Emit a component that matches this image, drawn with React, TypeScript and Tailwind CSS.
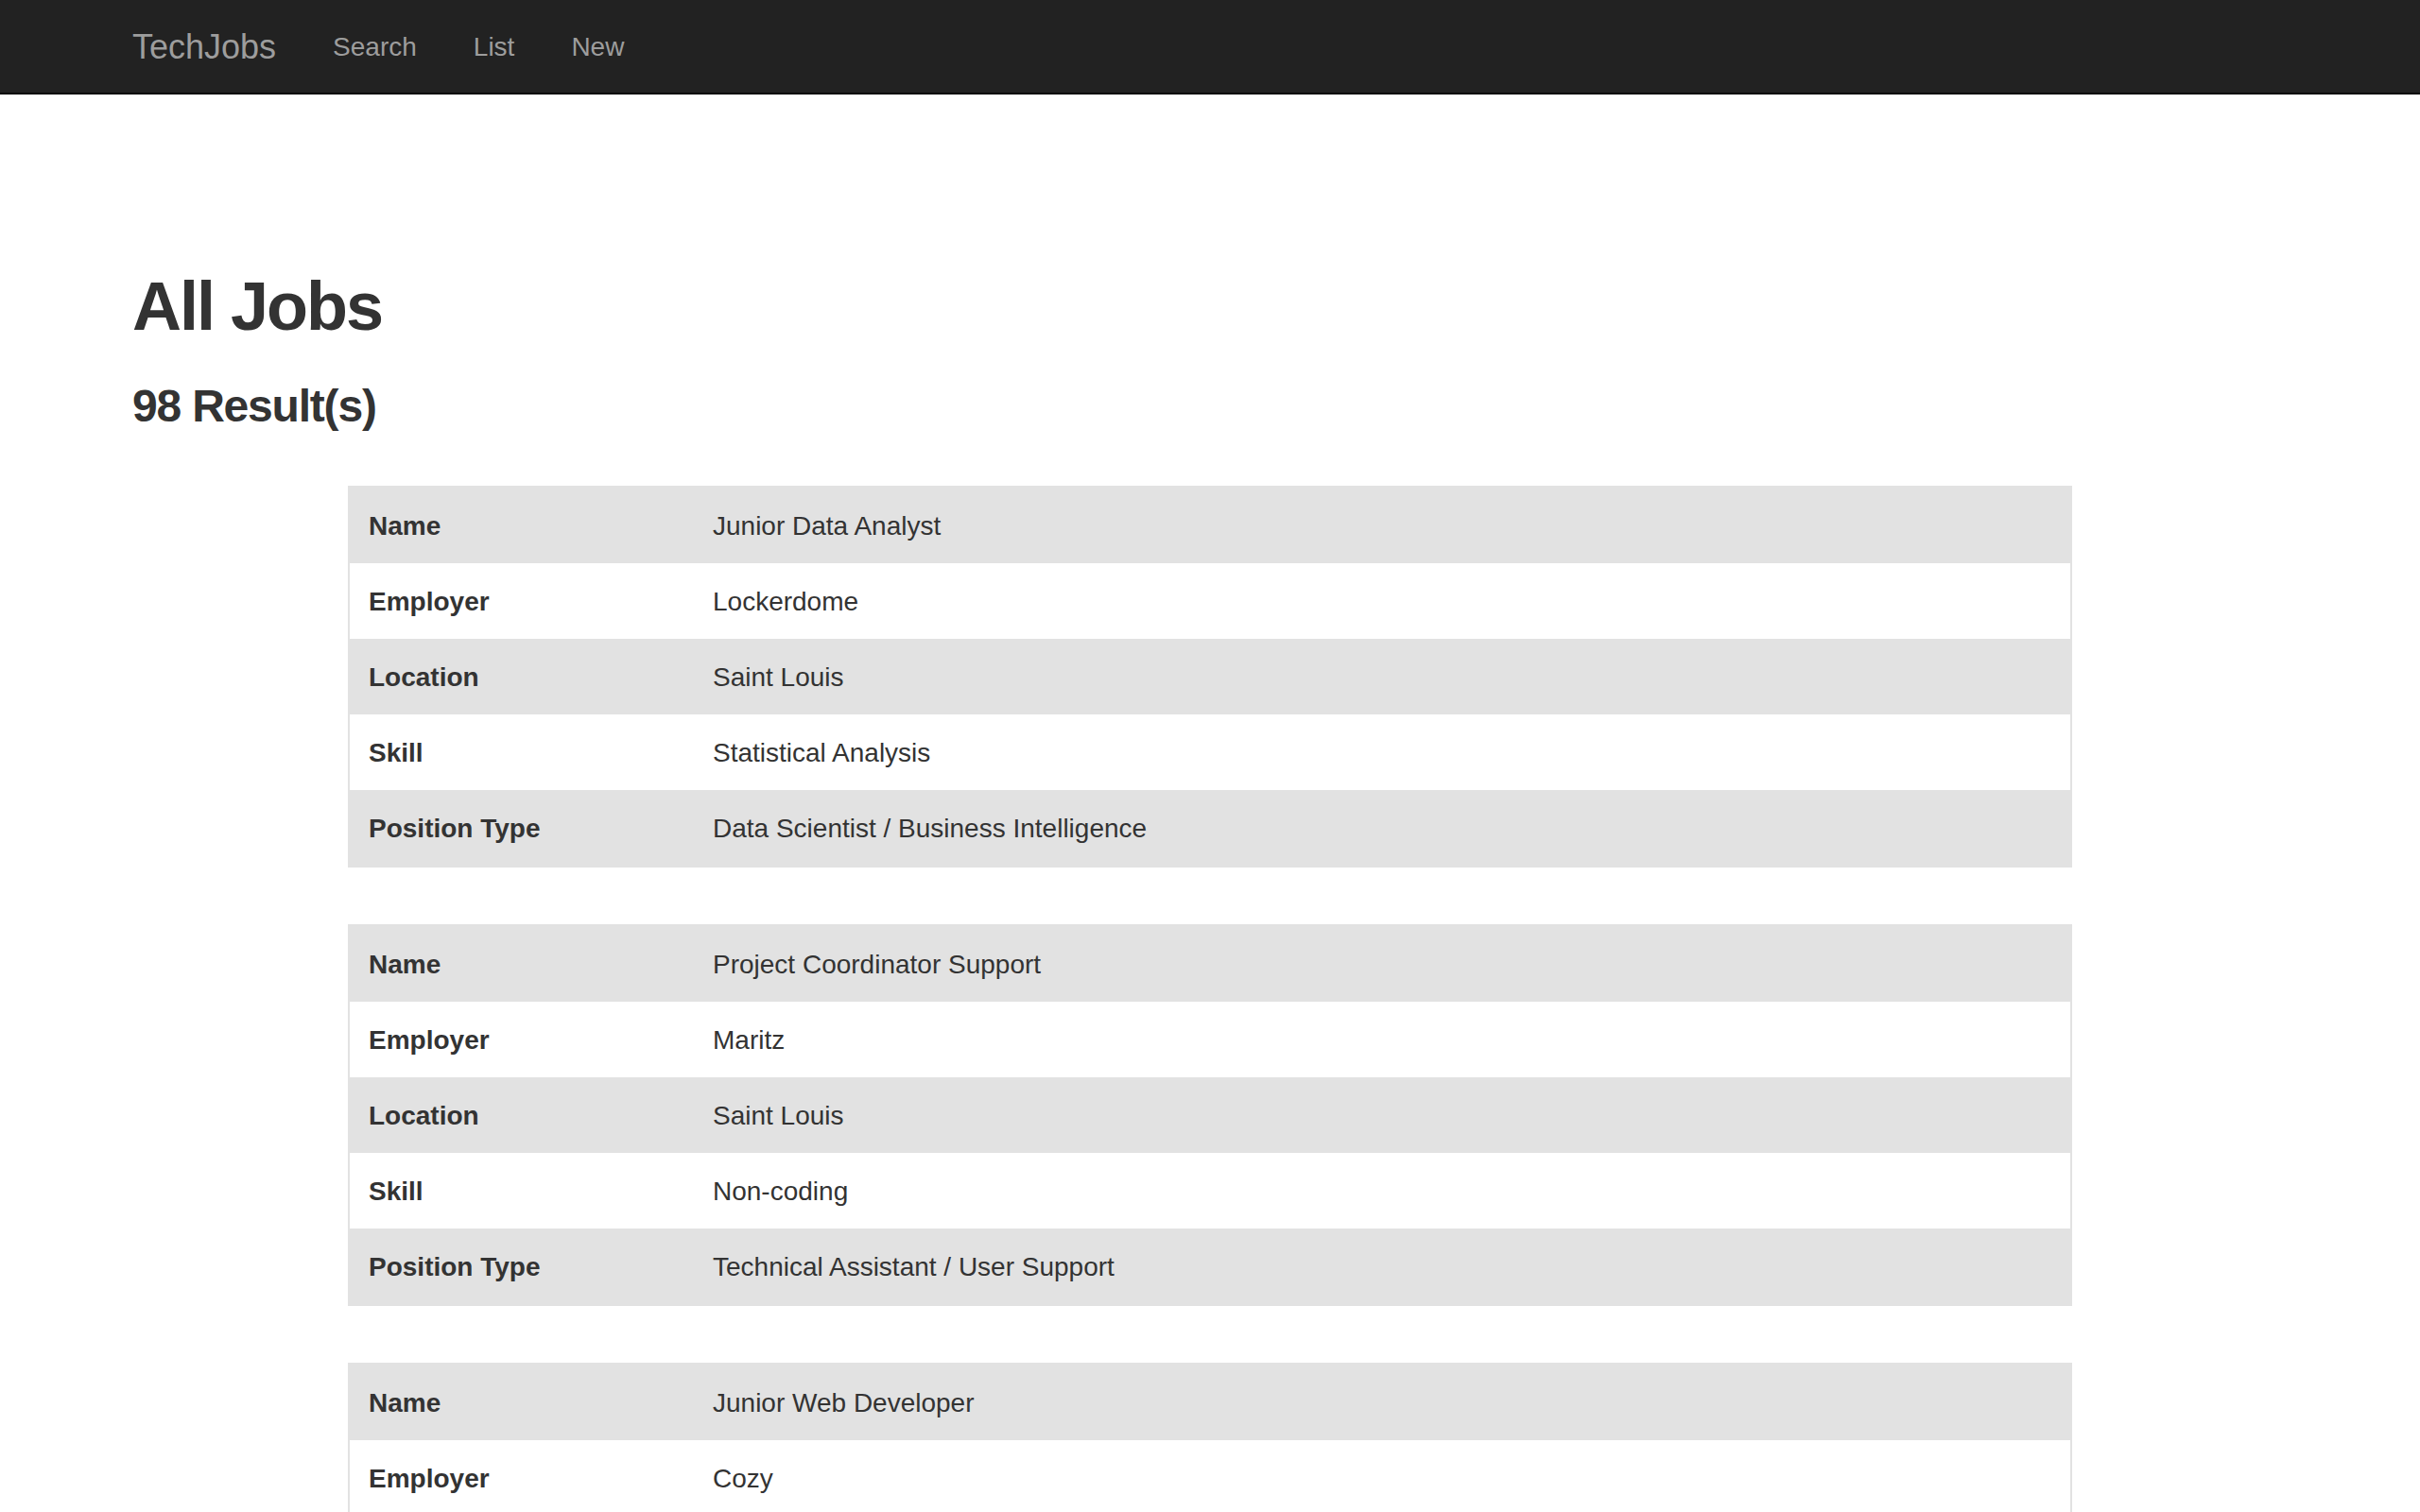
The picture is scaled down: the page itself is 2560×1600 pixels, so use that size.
const jobs = [
  {
    name: "Junior Data Analyst",
    employer: "Lockerdome",
    location: "Saint Louis",
    skill: "Statistical Analysis",
    positionType: "Data Scientist / Business Intelligence",
  },
  {
    name: "Project Coordinator Support",
    employer: "Maritz",
    location: "Saint Louis",
    skill: "Non-coding",
    positionType: "Technical Assistant / User Support",
  },
  {
    name: "Junior Web Developer",
    employer: "Cozy",
    location: "Portland",
    skill: "Ruby",
    positionType: "Web - Back End",
  },
];

type Job = (typeof jobs)[number];

const JobTable = ({ job }: { job: Job }) => {
  const rows = [
    ["Name", job.name],
    ["Employer", job.employer],
    ["Location", job.location],
    ["Skill", job.skill],
    ["Position Type", job.positionType],
  ];
  return (
    <table className="w-4/5 mx-auto mb-[60px] table-fixed border-separate border-spacing-0 border-2 border-[#e2e2e2]">
      <tbody>
        {rows.map(([label, value], i) => (
          <tr key={label} className={i % 2 === 0 ? "h-[80px] bg-[#e2e2e2]" : "h-[80px] bg-white"}>
            <td className="w-1/5 px-[20px] pt-[2px] align-middle font-bold text-[28px]">{label}</td>
            <td className="px-[20px] pt-[2px] align-middle text-[28px]">{value}</td>
          </tr>
        ))}
      </tbody>
    </table>
  );
};

export default function App() {
  return (
    <div className="min-h-screen bg-white text-[#333] font-['Liberation_Sans',Arial,sans-serif]">
      <nav className="h-[100px] bg-[#222] border-b-2 border-[#080808]">
        <div className="w-[2340px] mx-auto px-[30px] pt-[2px] h-full flex items-center text-[#9d9d9d]">
          <a className="text-[36px] pr-[30px]">TechJobs</a>
          <a className="text-[28px] px-[30px]">Search</a>
          <a className="text-[28px] px-[30px]">List</a>
          <a className="text-[28px] px-[30px]">New</a>
        </div>
      </nav>
      <main className="w-[2340px] mx-auto px-[30px]">
        <h1 className="mt-[185px] text-[72px] leading-[1.1] font-bold tracking-[-2px]">All Jobs</h1>
        <h3 className="mt-[40px] mb-[57px] text-[48px] leading-[1.1] font-bold tracking-[-1.2px]">98 Result(s)</h3>
        {jobs.map((job) => (
          <JobTable key={job.name} job={job} />
        ))}
      </main>
    </div>
  );
}
